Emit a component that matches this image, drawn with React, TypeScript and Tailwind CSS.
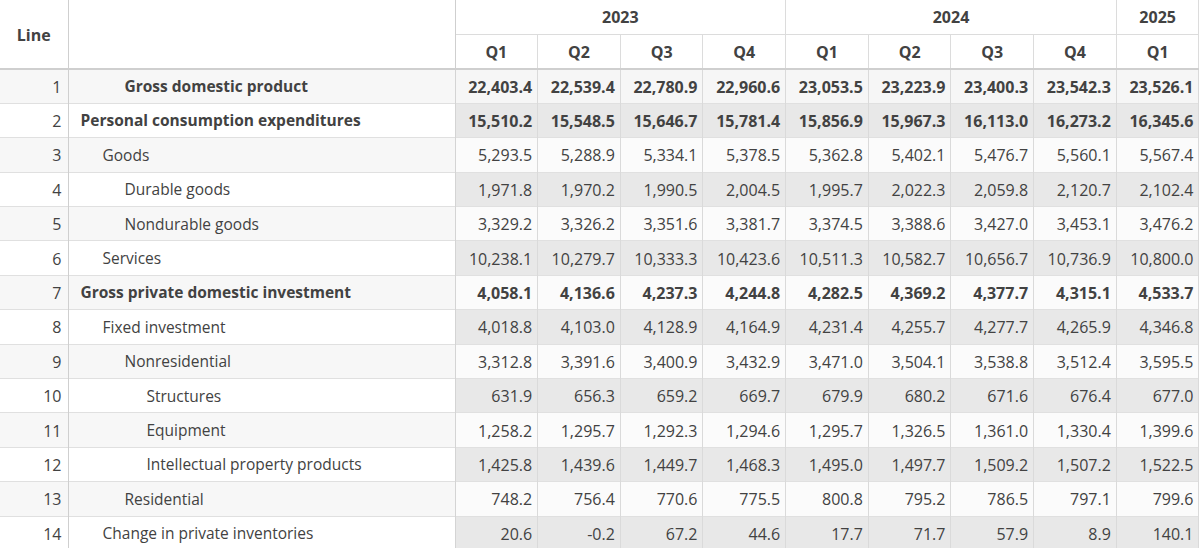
import React from 'react';

type Row = { line: number; label: string; level: number; bold?: boolean; values: string[] };

const rows: Row[] = [
  { line: 1, label: 'Gross domestic product', level: 2, bold: true, values: ['22,403.4', '22,539.4', '22,780.9', '22,960.6', '23,053.5', '23,223.9', '23,400.3', '23,542.3', '23,526.1'] },
  { line: 2, label: 'Personal consumption expenditures', level: 0, bold: true, values: ['15,510.2', '15,548.5', '15,646.7', '15,781.4', '15,856.9', '15,967.3', '16,113.0', '16,273.2', '16,345.6'] },
  { line: 3, label: 'Goods', level: 1, values: ['5,293.5', '5,288.9', '5,334.1', '5,378.5', '5,362.8', '5,402.1', '5,476.7', '5,560.1', '5,567.4'] },
  { line: 4, label: 'Durable goods', level: 2, values: ['1,971.8', '1,970.2', '1,990.5', '2,004.5', '1,995.7', '2,022.3', '2,059.8', '2,120.7', '2,102.4'] },
  { line: 5, label: 'Nondurable goods', level: 2, values: ['3,329.2', '3,326.2', '3,351.6', '3,381.7', '3,374.5', '3,388.6', '3,427.0', '3,453.1', '3,476.2'] },
  { line: 6, label: 'Services', level: 1, values: ['10,238.1', '10,279.7', '10,333.3', '10,423.6', '10,511.3', '10,582.7', '10,656.7', '10,736.9', '10,800.0'] },
  { line: 7, label: 'Gross private domestic investment', level: 0, bold: true, values: ['4,058.1', '4,136.6', '4,237.3', '4,244.8', '4,282.5', '4,369.2', '4,377.7', '4,315.1', '4,533.7'] },
  { line: 8, label: 'Fixed investment', level: 1, values: ['4,018.8', '4,103.0', '4,128.9', '4,164.9', '4,231.4', '4,255.7', '4,277.7', '4,265.9', '4,346.8'] },
  { line: 9, label: 'Nonresidential', level: 2, values: ['3,312.8', '3,391.6', '3,400.9', '3,432.9', '3,471.0', '3,504.1', '3,538.8', '3,512.4', '3,595.5'] },
  { line: 10, label: 'Structures', level: 3, values: ['631.9', '656.3', '659.2', '669.7', '679.9', '680.2', '671.6', '676.4', '677.0'] },
  { line: 11, label: 'Equipment', level: 3, values: ['1,258.2', '1,295.7', '1,292.3', '1,294.6', '1,295.7', '1,326.5', '1,361.0', '1,330.4', '1,399.6'] },
  { line: 12, label: 'Intellectual property products', level: 3, values: ['1,425.8', '1,439.6', '1,449.7', '1,468.3', '1,495.0', '1,497.7', '1,509.2', '1,507.2', '1,522.5'] },
  { line: 13, label: 'Residential', level: 2, values: ['748.2', '756.4', '770.6', '775.5', '800.8', '795.2', '786.5', '797.1', '799.6'] },
  { line: 14, label: 'Change in private inventories', level: 1, values: ['20.6', '-0.2', '67.2', '44.6', '17.7', '71.7', '57.9', '8.9', '140.1'] },
];

const indent = ['pl-3', 'pl-[34px]', 'pl-[56px]', 'pl-[78px]'];
const quarters = ['Q1', 'Q2', 'Q3', 'Q4', 'Q1', 'Q2', 'Q3', 'Q4', 'Q1'];

export default function App() {
  return (
    <div className="w-[1200px] h-[548px] overflow-hidden bg-white text-[#424242] text-[16px] font-['Open_Sans','Noto_Sans',sans-serif]">
      <table className="w-[1199px] table-fixed border-collapse">
        <colgroup>
          <col className="w-[68px]" />
          <col className="w-[387px]" />
          {quarters.map((_, i) => (
            <col key={i} className="w-[82.67px]" />
          ))}
        </colgroup>
        <thead>
          <tr className="h-[34.5px]">
            <th rowSpan={2} className="border-r border-[#cfcfcf] pt-px text-center font-bold">Line</th>
            <th rowSpan={2} className="border-r border-[#cfcfcf]"></th>
            <th colSpan={4} className="border-r border-b border-[#dcdcdc] text-center font-bold">2023</th>
            <th colSpan={4} className="border-r border-b border-[#dcdcdc] text-center font-bold">2024</th>
            <th className="border-r border-b border-[#dcdcdc] text-center font-bold">2025</th>
          </tr>
          <tr className="h-[34.5px]">
            {quarters.map((q, i) => (
              <th key={i} className="border-r border-[#dcdcdc] pt-px text-center font-bold">{q}</th>
            ))}
          </tr>
        </thead>
        <tbody className="border-t-2 border-[#cfcfcf]">
          {rows.map((r, idx) => {
            const odd = idx % 2 === 0;
            const labelBg = odd ? 'bg-[#f7f7f7]' : 'bg-white';
            const dataBg = idx === 0 ? 'bg-[#f6f6f6]' : odd ? 'bg-[#fbfbfb]' : 'bg-[#e8e8e8]';
            const weight = r.bold ? 'font-bold' : 'font-normal';
            return (
              <tr key={r.line} className="h-[34.4px] border-b border-[#e0e0e0]">
                <td className={`${labelBg} border-r border-[#cfcfcf] pt-px pr-[6px] text-right`}>{r.line}</td>
                <td className={`${labelBg} ${indent[r.level]} ${weight} pt-px text-[15.5px] border-r border-[#d4d4d4] whitespace-nowrap`}>{r.label}</td>
                {r.values.map((v, i) => (
                  <td key={i} className={`${dataBg} ${weight} border-r border-[#dadada] pt-px pr-[5px] text-right`}>{v}</td>
                ))}
              </tr>
            );
          })}
        </tbody>
      </table>
    </div>
  );
}
